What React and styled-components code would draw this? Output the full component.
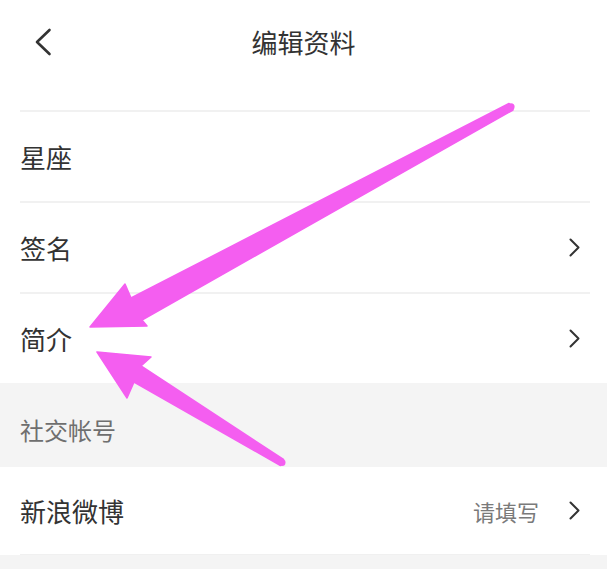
import React from 'react';
import styled, { createGlobalStyle } from 'styled-components';

const GlobalStyle = createGlobalStyle`
  html, body {
    margin: 0;
    padding: 0;
    background: #ffffff;
  }
  body {
    font-family: "Noto Sans CJK SC", "Noto Sans", sans-serif;
    color: #333333;
  }
`;

const Page = styled.div`
  position: relative;
  width: 607px;
  height: 569px;
  overflow: hidden;
  background: #f4f4f4;
`;

const Header = styled.header`
  display: grid;
  grid-template-columns: 1fr auto 1fr;
  align-items: center;
  height: 84px;
  background: #ffffff;
`;

const BackButton = styled.button`
  justify-self: start;
  display: flex;
  align-items: center;
  padding: 0 0 0 34px;
  border: 0;
  background: none;
  height: 30px;
`;

const Title = styled.h1`
  margin: 0;
  font-size: 26px;
  font-weight: 400;
  line-height: 1;
  color: #333333;
`;

const Spacer = styled.div`
  height: 26px;
  background: #ffffff;
`;

const Group = styled.section`
  background: #ffffff;
  padding: 0 17px 0 20px;
`;

const Row = styled.div`
  display: flex;
  align-items: center;
  justify-content: space-between;
  box-sizing: border-box;
  height: ${(p) => p.height || 91}px;
  border-top: ${(p) => (p.noBorder ? '0' : '2px solid #f1f1f1')};
  border-bottom: ${(p) => (p.bottomBorder ? '1px solid #f0f0f0' : '0')};
`;

const Label = styled.span`
  font-size: 26px;
  line-height: 1;
  color: #333333;
`;

const Trail = styled.div`
  display: flex;
  align-items: center;
  gap: 30px;
  padding-right: 9px;
`;

const Placeholder = styled.span`
  font-size: 22px;
  line-height: 1;
  color: #7a7a7a;
`;

const SectionHeader = styled.div`
  display: flex;
  align-items: flex-end;
  box-sizing: border-box;
  height: 84px;
  padding: 0 0 25px 20px;
`;

const SectionTitle = styled.span`
  font-size: 24px;
  line-height: 1;
  color: #6f6f6f;
`;

const Overlay = styled.svg`
  position: absolute;
  left: 0;
  top: 0;
  pointer-events: none;
`;

const Chevron = () => (
  <svg width="12" height="19" viewBox="0 0 12 19">
    <path d="M1.5 1.5 L9.5 9.5 L1.5 17.5" fill="none" stroke="#333" strokeWidth="2" strokeLinecap="round" strokeLinejoin="round" />
  </svg>
);

const BackIcon = () => (
  <svg width="18" height="28" viewBox="0 0 18 28">
    <path d="M15.5 2 L3 14 L15.5 26" fill="none" stroke="#333" strokeWidth="2.6" strokeLinecap="round" strokeLinejoin="round" />
  </svg>
);

const ARROW = '#f45ef0';

export default function App() {
  return (
    <>
      <GlobalStyle />
      <Page>
        <Header>
          <BackButton aria-label="返回">
            <BackIcon />
          </BackButton>
          <Title>编辑资料</Title>
          <span />
        </Header>
        <Spacer />
        <Group>
          <Row>
            <Label>星座</Label>
          </Row>
          <Row>
            <Label>签名</Label>
            <Trail>
              <Chevron />
            </Trail>
          </Row>
          <Row>
            <Label>简介</Label>
            <Trail>
              <Chevron />
            </Trail>
          </Row>
        </Group>
        <SectionHeader>
          <SectionTitle>社交帐号</SectionTitle>
        </SectionHeader>
        <Group>
          <Row noBorder bottomBorder height={88}>
            <Label>新浪微博</Label>
            <Trail>
              <Placeholder>请填写</Placeholder>
              <Chevron />
            </Trail>
          </Row>
        </Group>

        <Overlay width="607" height="569" viewBox="0 0 607 569">
          <g fill={ARROW} stroke={ARROW} strokeWidth="1.5" strokeLinejoin="round">
            <polygon points="90,327 125,284 131,298 509,103.5 513,110 142,320 147,326" />
            <circle cx="511" cy="106.8" r="3.6" stroke="none" />
            <polygon points="97,352 151,357 141,366 283.5,459.5 280.5,465.5 134,382 127,398" />
            <circle cx="282" cy="462.5" r="3.5" stroke="none" />
          </g>
        </Overlay>
      </Page>
    </>
  );
}
